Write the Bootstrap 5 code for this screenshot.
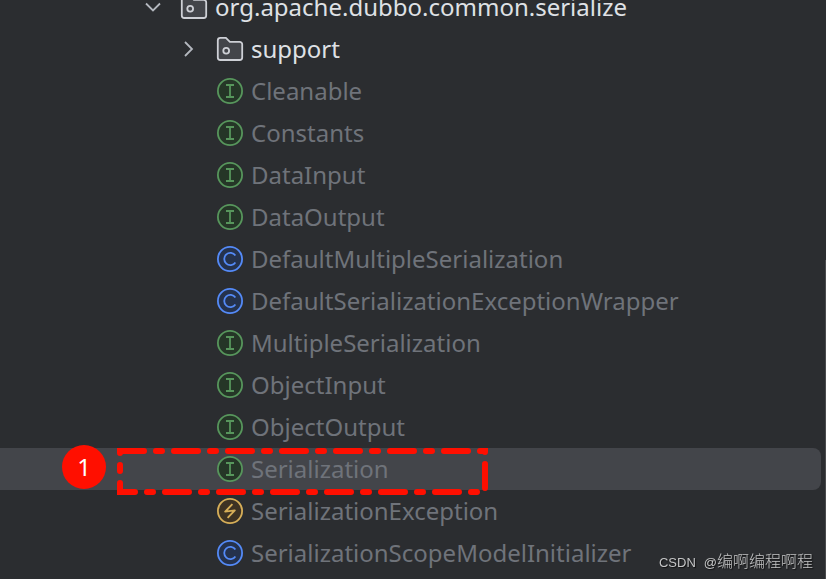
<!DOCTYPE html>
<html lang="en">
<head>
<meta charset="utf-8">
<meta name="viewport" content="width=device-width, initial-scale=1">
<title>Project tree</title>
<link href="https://cdn.jsdelivr.net/npm/bootstrap@5.3.0/dist/css/bootstrap.min.css" rel="stylesheet">
<style>
  body { background: #2b2d30; color: #dfe1e5; font-family: "Noto Sans", "Open Sans", sans-serif; font-size: 24px; line-height: 42px; }
  .tree { margin-top: -14px; }
  .tree-row { height: 42px; gap: 7px; padding-left: 216px; color: #6f737a; white-space: nowrap; }
  .tree-row.package { color: #dfe1e5; }
  .level-0 { padding-left: 139px; }
  .level-1 { padding-left: 175px; }
  .tree-row svg { flex: none; }
  .toggle { width: 28px; height: 28px; margin-right: 6px; }
  .tree-row.selected { background: #43454a; margin-right: 5px; border-radius: 0 8px 8px 0; }
  .marker-box { left: 117px; top: 0; }
  .marker-number { left: 62px; top: -3px; width: 44px; height: 44px; background: #ff0f00; color: #fff; }
  .watermark { right: 13px; bottom: 4px; font-family: "Noto Sans CJK SC", sans-serif; font-size: 16px; line-height: 24px; font-weight: 300; color: #c4c5c6; text-shadow: 1px 1px 1px #111; }
  .watermark .latin { font-family: "Liberation Sans", sans-serif; font-size: 13px; }
  .scroll-edge { right: 0; top: 260px; bottom: 0; width: 1px; background: #4a4b4d; }
</style>
</head>
<body class="overflow-hidden">
<svg class="d-none" aria-hidden="true">
  <symbol id="folder" viewBox="0 0 28 28">
    <path d="M1.8 5.2a2.5 2.5 0 0 1 2.5-2.4h5.6l4 4h9.8a2.5 2.5 0 0 1 2.5 2.5v13.2a2.5 2.5 0 0 1-2.5 2.5H4.3a2.5 2.5 0 0 1-2.5-2.5z" fill="#43454a" stroke="#ced0d6" stroke-width="1.8"/>
    <circle cx="10.2" cy="15.8" r="2.9" fill="#43454a" stroke="#ced0d6" stroke-width="1.8"/>
  </symbol>
  <symbol id="interface" viewBox="0 0 28 28">
    <circle cx="14" cy="14" r="12.1" fill="#253627" stroke="#57965c" stroke-width="1.8"/>
    <path d="M10 8h8M14 8v12M10 20h8" fill="none" stroke="#57965c" stroke-width="1.8"/>
  </symbol>
  <symbol id="class" viewBox="0 0 28 28">
    <circle cx="14" cy="14" r="12.1" fill="#25324d" stroke="#548af7" stroke-width="1.8"/>
    <path d="M19.4 10.6a6.1 6.1 0 1 0 0 6.8" fill="none" stroke="#548af7" stroke-width="1.8"/>
  </symbol>
  <symbol id="exception" viewBox="0 0 28 28">
    <circle cx="14" cy="14" r="12.1" fill="#3d3223" stroke="#d6ae58" stroke-width="1.8"/>
    <path d="M16.4 7.2 9.2 14.6 18.8 13.4 11.6 20.8" fill="none" stroke="#d6ae58" stroke-width="1.9" stroke-linejoin="round"/>
  </symbol>
</svg>
<main class="position-relative overflow-hidden">
  <ul class="tree list-unstyled mb-0">
    <li class="tree-row package level-0 d-flex align-items-center">
      <button type="button" class="toggle btn p-0 border-0 d-flex" aria-label="Collapse package" aria-expanded="true"><svg width="28" height="28" viewBox="0 0 28 28"><path d="M7 10.5 14 17.5 21 10.5" fill="none" stroke="#b4b8bf" stroke-width="1.8"/></svg></button>
      <svg width="28" height="28"><use href="#folder"/></svg><span>org.apache.dubbo.common.serialize</span>
    </li>
    <li class="tree-row package level-1 d-flex align-items-center">
      <button type="button" class="toggle btn p-0 border-0 d-flex" aria-label="Expand support" aria-expanded="false"><svg width="28" height="28" viewBox="0 0 28 28"><path d="M10 7 17 14 10 21" fill="none" stroke="#b4b8bf" stroke-width="1.8"/></svg></button>
      <svg width="28" height="28"><use href="#folder"/></svg><span>support</span>
    </li>
    <li class="tree-row d-flex align-items-center"><svg width="28" height="28"><use href="#interface"/></svg><span>Cleanable</span></li>
    <li class="tree-row d-flex align-items-center"><svg width="28" height="28"><use href="#interface"/></svg><span>Constants</span></li>
    <li class="tree-row d-flex align-items-center"><svg width="28" height="28"><use href="#interface"/></svg><span>DataInput</span></li>
    <li class="tree-row d-flex align-items-center"><svg width="28" height="28"><use href="#interface"/></svg><span>DataOutput</span></li>
    <li class="tree-row d-flex align-items-center"><svg width="28" height="28"><use href="#class"/></svg><span>DefaultMultipleSerialization</span></li>
    <li class="tree-row d-flex align-items-center"><svg width="28" height="28"><use href="#class"/></svg><span>DefaultSerializationExceptionWrapper</span></li>
    <li class="tree-row d-flex align-items-center"><svg width="28" height="28"><use href="#interface"/></svg><span>MultipleSerialization</span></li>
    <li class="tree-row d-flex align-items-center"><svg width="28" height="28"><use href="#interface"/></svg><span>ObjectInput</span></li>
    <li class="tree-row d-flex align-items-center"><svg width="28" height="28"><use href="#interface"/></svg><span>ObjectOutput</span></li>
    <li class="tree-row selected position-relative d-flex align-items-center">
      <svg width="28" height="28"><use href="#interface"/></svg><span>Serialization</span>
      <span class="marker-number position-absolute rounded-circle d-flex align-items-center justify-content-center">1</span>
      <svg class="marker-box position-absolute" width="372" height="48" viewBox="0 0 372 48" aria-hidden="true"><path d="M3 3H368V44H3Z" fill="none" stroke="#ff0f00" stroke-width="6" stroke-linecap="round" stroke-dasharray="24 12 6 12"/></svg>
    </li>
    <li class="tree-row d-flex align-items-center"><svg width="28" height="28"><use href="#exception"/></svg><span>SerializationException</span></li>
    <li class="tree-row d-flex align-items-center"><svg width="28" height="28"><use href="#class"/></svg><span>SerializationScopeModelInitializer</span></li>
  </ul>
</main>
<div class="scroll-edge position-fixed"></div>
<div class="watermark position-fixed" lang="zh-CN"><span class="latin me-2">CSDN</span><span class="latin">@</span>编啊编程啊程</div>
<script src="https://cdn.jsdelivr.net/npm/bootstrap@5.3.0/dist/js/bootstrap.bundle.min.js"></script>
</body>
</html>
